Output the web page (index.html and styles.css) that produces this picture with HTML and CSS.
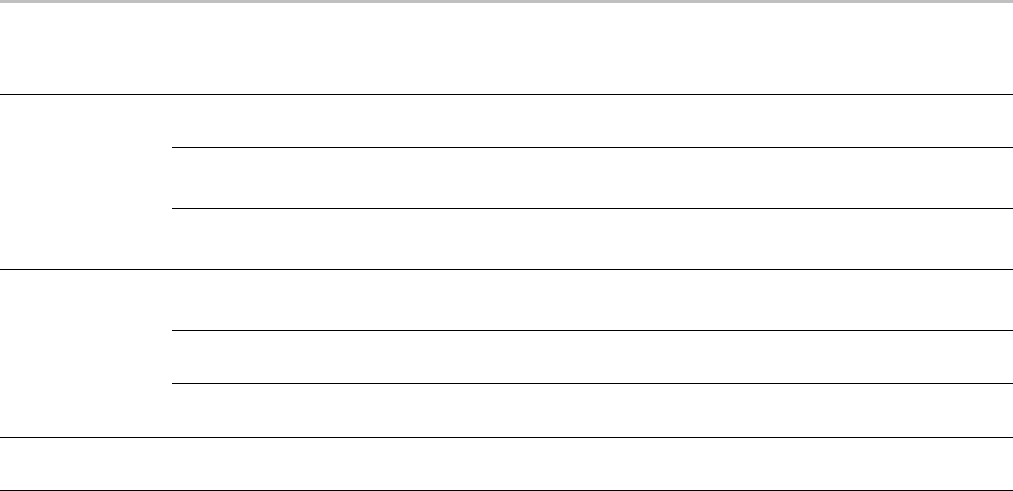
FILE: index.html
```html
<!DOCTYPE html>
<html lang="en">
<head>
<meta charset="utf-8">
<title>Table</title>
<link rel="stylesheet" href="styles.css">
</head>
<body>
<div class="table">
  <div class="head"></div>
  <div class="group">
    <div class="label"></div>
    <div class="subs">
      <div class="sub h52"></div>
      <div class="sub h60"></div>
      <div class="sub h60"></div>
    </div>
  </div>
  <div class="group">
    <div class="label"></div>
    <div class="subs">
      <div class="sub h60"></div>
      <div class="sub h52"></div>
      <div class="sub h53"></div>
    </div>
  </div>
  <div class="row"></div>
</div>
</body>
</html>
```
FILE: styles.css
```css
html, body {
  margin: 0;
  padding: 0;
  background: #ffffff;
  font-family: "Liberation Sans", Arial, sans-serif;
}
.table {
  width: 1013px;
  border-top: 3px solid #c0c0c0;
}
.head {
  height: 91px;
}
.group {
  display: grid;
  grid-template-columns: 172px 1fr;
  border-top: 1px solid #000;
}
.subs {
  display: flex;
  flex-direction: column;
}
.sub + .sub {
  border-top: 1px solid #000;
}
.h52 { height: 52px; }
.h53 { height: 53px; }
.h60 { height: 60px; }
.row {
  height: 52px;
  border-top: 1px solid #000;
  border-bottom: 1px solid #000;
}
```
